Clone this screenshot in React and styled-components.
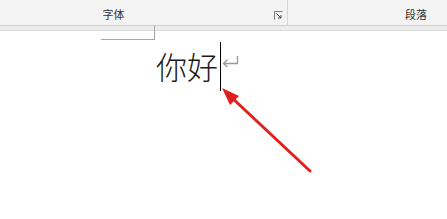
import React from "react";
import styled, { createGlobalStyle } from "styled-components";

const Global = createGlobalStyle`
  html, body { margin: 0; padding: 0; background: #fff; }
  body { width: 447px; height: 219px; overflow: hidden; font-family: "Noto Sans CJK SC", "Noto Sans", sans-serif; }
`;

const Page = styled.div`
  position: relative;
  width: 447px;
  height: 219px;
  background: #fff;
`;

const Ribbon = styled.div`
  display: flex;
  height: 25px;
  background: #f3f3f3;
  border-bottom: 1px solid #d2d2d2;
`;

const Group = styled.div`
  position: relative;
  display: flex;
  align-items: center;
  justify-content: ${(p) => p.$align || "center"};
  width: ${(p) => p.$w}px;
  padding-top: 3px;
  box-sizing: border-box;
  border-right: ${(p) => (p.$sep ? "1px solid #d6d6d6" : "none")};
  font-size: 11px;
  color: #333;
`;

const Label = styled.span`
  margin-left: ${(p) => p.$ml || 0}px;
  margin-right: ${(p) => p.$mr || 0}px;
`;

const Launcher = styled.svg`
  position: absolute;
  right: 4px;
  bottom: 5px;
`;

const Strip = styled.div`
  height: 4px;
  background: #ececec;
  border-bottom: 1px solid #dcdcdc;
`;

const Body = styled.div`
  position: relative;
  height: 189px;
`;

const Corner = styled.div`
  position: absolute;
  left: 101px;
  top: -5px;
  width: 53px;
  height: 13px;
  border-right: 1px solid #a6a6a6;
  border-bottom: 1px solid #a6a6a6;
`;

const Line = styled.div`
  position: absolute;
  left: 156px;
  top: 11px;
  display: flex;
  align-items: flex-start;
  font-family: "Noto Sans CJK SC", sans-serif;
  font-weight: 300;
  font-size: 31px;
  line-height: 48px;
  height: 49px;
  color: #1a1a1a;
`;

const Cursor = styled.span`
  display: inline-block;
  width: 1px;
  height: 49px;
  background: #000;
  margin-left: 2px;
`;

const ReturnMark = styled.svg`
  margin-left: 1px;
  margin-top: 13px;
`;

const Arrow = styled.svg`
  position: absolute;
  left: 0;
  top: 0;
`;

export default function App() {
  return (
    <Page>
      <Global />
      <Ribbon>
        <Group $w={288} $sep>
          <Label $ml={-60}>字体</Label>
          <Launcher width="9" height="9" viewBox="0 0 9 9">
            <path d="M0.5 8.5 V0.5 H8.5" stroke="#7a7a7a" fill="none" />
            <path d="M2.5 2.5 L7 7 M7 4 V7 H4" stroke="#444" fill="none" />
          </Launcher>
        </Group>
        <Group $w={159} $align="flex-end">
          <Label $mr={20}>段落</Label>
        </Group>
      </Ribbon>
      <Strip />
      <Body>
        <Corner />
        <Line>
          你好
          <Cursor />
          <ReturnMark width="17" height="12" viewBox="0 0 17 12">
            <path d="M15.5 1 V8.5 H1.5 M5.5 4.5 L1.5 8.5 L5.5 12" stroke="#999" strokeWidth="1.3" fill="none" />
          </ReturnMark>
        </Line>
      </Body>
      <Arrow width="447" height="219" viewBox="0 0 447 219">
        <line x1="310" y1="171" x2="230" y2="96" stroke="#e0201e" strokeWidth="3" strokeLinecap="round" />
        <polygon points="222,88 239,96 230,105" fill="#e0201e" />
      </Arrow>
    </Page>
  );
}
